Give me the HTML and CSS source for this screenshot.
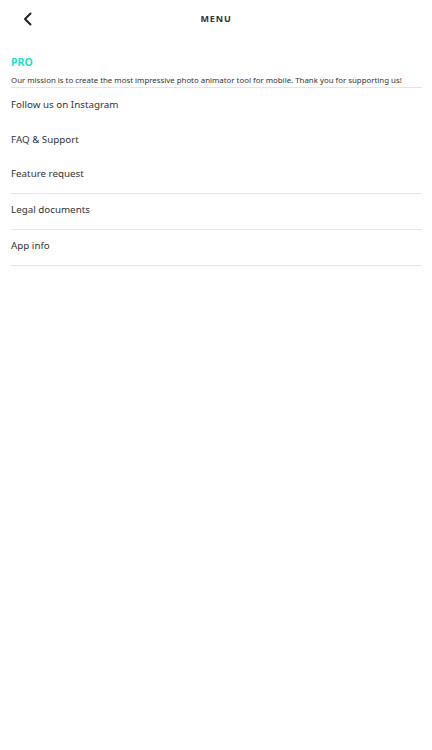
FILE: index.html
```html
<!DOCTYPE html>
<html>
<head>
<meta charset="utf-8">
<link rel="stylesheet" href="styles.css">
</head>
<body>
<div class="app">
  <header class="topbar">
    <button class="back" aria-label="Back">
      <svg width="12" height="14" viewBox="0 0 12 14"><path d="M8.5 1.5 L3 7 L8.5 12.5" fill="none" stroke="#222" stroke-width="2" stroke-linecap="round" stroke-linejoin="round"/></svg>
    </button>
    <div class="title">MENU</div>
    <div class="spacer"></div>
  </header>
  <main class="content">
    <section class="pro">
      <div class="pro-title">PRO</div>
      <div class="pro-text">Our mission is to create the most impressive photo animator tool for mobile. Thank you for supporting us!</div>
    </section>
    <ul class="menu">
      <li class="item">Follow us on Instagram</li>
      <li class="item">FAQ &amp; Support</li>
      <li class="item bordered">Feature request</li>
      <li class="item bordered">Legal documents</li>
      <li class="item bordered">App info</li>
    </ul>
  </main>
</div>
</body>
</html>
```
FILE: styles.css
```css
html, body {
  margin: 0;
  padding: 0;
  background: #fff;
}
body {
  font-family: "Noto Sans", "Open Sans", sans-serif;
  color: #333;
}
.topbar {
  display: flex;
  align-items: center;
  height: 37px;
  padding: 0 11px;
}
.back {
  width: 32px;
  height: 37px;
  border: 0;
  background: none;
  padding: 0 0 0 11px;
  display: flex;
  align-items: center;
  cursor: pointer;
}
.title {
  flex: 1;
  text-align: center;
  font-size: 9px;
  font-weight: 700;
  letter-spacing: 0.9px;
  color: #333;
  margin-bottom: 1px;
}
.spacer {
  width: 32px;
}
.content {
  padding: 0 10px 0 11px;
}
.pro {
  padding-top: 17px;
  border-bottom: 1px solid #e6e6e6;
}
.pro-title {
  color: #1ee3c4;
  font-weight: 700;
  font-size: 10.5px;
  line-height: 16px;
}
.pro-text {
  margin-top: 3px;
  font-size: 7.85px;
  line-height: 14px;
  color: #333;
  white-space: nowrap;
}
.menu {
  list-style: none;
  margin: 0;
  padding: 0;
}
.item {
  box-sizing: border-box;
  height: 35px;
  padding-bottom: 3px;
  display: flex;
  align-items: center;
  font-size: 9.8px;
  color: #333;
}
.item.bordered {
  height: 36px;
  padding-bottom: 4px;
  border-bottom: 1px solid #e6e6e6;
}
```
